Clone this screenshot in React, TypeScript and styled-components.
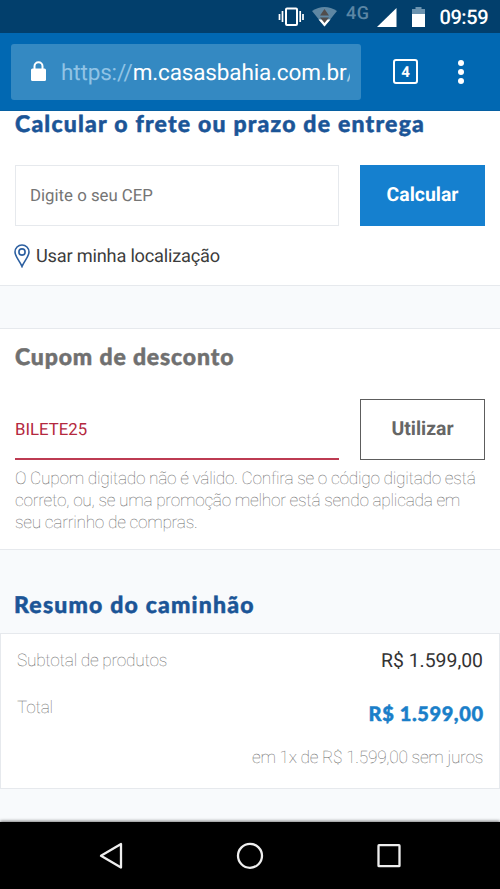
import React from "react";
import styled, { createGlobalStyle } from "styled-components";

const Global = createGlobalStyle`
  * { box-sizing: border-box; }
  body { margin: 0; background: #f8fafc; font-family: Roboto, "Liberation Sans", sans-serif; text-rendering: geometricPrecision; }
  button, input { font-family: inherit; margin: 0; border-radius: 0; text-rendering: inherit; }
`;

const Screen = styled.div`
  width: 500px;
  height: 889px;
  display: flex;
  flex-direction: column;
  overflow: hidden;
  background: #f8fafc;
`;

const StatusBar = styled.header`
  flex: none;
  height: 33px;
  background: #023f6c;
  svg { display: block; }
`;

const Toolbar = styled.div`
  flex: none;
  height: 78px;
  padding: 0 33px 0 11px;
  display: flex;
  align-items: center;
  background: #0168b2;
  border-bottom: 1px solid #0660a2;
`;

const AddressBar = styled.div`
  width: 350px;
  height: 56px;
  padding-left: 19px;
  border-radius: 3px;
  display: flex;
  align-items: center;
  gap: 14px;
  background: #3489c2;
  overflow: hidden;
`;

const Url = styled.span`
  width: 289px;
  overflow: hidden;
  white-space: nowrap;
  font-size: 22.5px;
  line-height: 32px;
  padding-top: 2px;
  letter-spacing: -0.15px;
  color: #fff;
`;

const Scheme = styled.span`
  color: #90c3e5;
`;

const Slash = styled.span`
  color: #a5cbe5;
`;

const TabCount = styled.div`
  width: 25px;
  height: 25px;
  margin-left: 32px;
  border: 2px solid #fff;
  border-radius: 3px;
  display: flex;
  align-items: center;
  justify-content: center;
  color: #fff;
  font-size: 15px;
  font-weight: 700;
`;

const MenuDots = styled.div`
  margin-left: auto;
  margin-right: 3px;
  display: flex;
  flex-direction: column;
  gap: 3px;
`;

const Dot = styled.i`
  width: 6px;
  height: 6px;
  border-radius: 50%;
  background: #fff;
`;

const Page = styled.main`
  flex: 1;
  min-height: 0;
  overflow: hidden;
`;

const Section = styled.section<{ $height: number; $first?: boolean }>`
  height: ${(p) => p.$height}px;
  padding: 0 15px;
  background: #fff;
  border-bottom: 1px solid #e6e9ed;
  border-top: ${(p) => (p.$first ? "0" : "1px solid #e6e9ed")};
  margin-bottom: ${(p) => (p.$first ? 42 : 0)}px;
`;

const Heading = styled.h2<{ $color?: string; $top: number; $track: number }>`
  margin: 0;
  padding: ${(p) => p.$top}px 0 2px;
  font-family: "Lato Black", Lato, sans-serif;
  font-weight: 900;
  font-size: 23px;
  line-height: 24px;
  letter-spacing: ${(p) => p.$track}px;
  white-space: nowrap;
  color: ${(p) => p.$color ?? "#1b5597"};
  -webkit-text-stroke: 0.5px currentColor;
`;

const FormRow = styled.div<{ $top: number }>`
  margin-top: ${(p) => p.$top}px;
  display: flex;
  gap: 21px;
`;

const Field = styled.input<{ $error?: boolean }>`
  width: 324px;
  height: 61px;
  outline: none;
  background: #fff;
  font-size: 16.8px;
  padding: ${(p) => (p.$error ? "2px 0 0" : "1px 14px 0")};
  border: 1px solid #e6e9ed;
  ${(p) => p.$error && "border-width: 0 0 2px; border-color: #bd3b52;"}
  color: #b4283e;
  &::placeholder { color: #757575; opacity: 1; }
`;

const Button = styled.button<{ $outline?: boolean }>`
  width: 125px;
  height: 61px;
  padding: 0 0 2px;
  border: ${(p) => (p.$outline ? "1px solid #5d5d5d" : "0")};
  background: ${(p) => (p.$outline ? "#fff" : "#1580cf")};
  color: ${(p) => (p.$outline ? "#666" : "#fff")};
  font-size: 19.4px;
  font-weight: 700;
`;

const LocationLink = styled.div`
  margin: 15px 0 0 -1px;
  display: flex;
  align-items: center;
  gap: 6px;
  font-size: 18.2px;
  letter-spacing: -0.2px;
  line-height: 26px;
  color: #3b3b3b;
  span { padding-top: 3px; }
  svg { margin-top: 1px; }
`;

const ErrorText = styled.p`
  margin: 8px 0 0;
  font-size: 17.3px;
  line-height: 22px;
  font-weight: 100;
  letter-spacing: -0.27px;
  color: #686868;
  white-space: nowrap;
`;

const SummaryBox = styled.section`
  height: 156px;
  padding: 13px 16px 0;
  background: #fff;
  border: 1px solid #e6e9ed;
`;

const SummaryHead = styled.div`
  height: 83px;
  padding-left: 14px;
`;

const SummaryRow = styled.div<{ $height: number }>`
  height: ${(p) => p.$height}px;
  display: flex;
  justify-content: space-between;
  line-height: 26px;
`;

const Muted = styled.span`
  padding-top: 1px;
  font-size: 17.3px;
  font-weight: 100;
  letter-spacing: -0.27px;
  color: #686868;
`;

const Price = styled.span`
  padding-top: 1px;
  font-size: 19.4px;
  color: #333;
`;

const Total = styled.strong`
  padding-top: 7px;
  font-family: "Lato Black", Lato, sans-serif;
  font-weight: 900;
  font-size: 20px;
  letter-spacing: 0.6px;
  margin-right: -0.6px;
  color: #1a7fc9;
  -webkit-text-stroke: 0.5px currentColor;
`;

const Installments = styled.div`
  padding-top: 2px;
  text-align: right;
  line-height: 24px;
`;

const NavBar = styled.nav`
  flex: none;
  height: 67px;
  background: #000;
  box-shadow: 0 -1px 3px rgba(0, 0, 0, 0.5);
  position: relative;
  svg { display: block; }
`;

export default function App() {
  return (
    <Screen>
      <Global />
      <StatusBar>
        <svg width="500" height="33" viewBox="0 0 500 33" fontFamily="Roboto">
          <g fill="none" stroke="#fff" strokeWidth="2">
            <rect x="286" y="8.5" width="11" height="16.5" rx="1" />
            <path d="M282.5 11v11M279.5 14v6M300.2 11v11M303 14v6" strokeWidth="1.7" />
          </g>
          <path d="M312 11Q324.500 3 337 11L324.500 26.500Z" fill="#5f87a3" />
          <path d="M318.500 19.500H330.500L324.500 26.500Z" fill="#fff" />
          <path d="M320 15.500L324.500 9L329 15.500ZM320 17.500H329L324.500 23Z" fill="#514d4c" />
          <text x="346" y="18.500" fontSize="18" fontWeight="500" letterSpacing="0.6" fill="#5b86a5">4G</text>
          <path d="M377 27L396.500 8V27Z" fill="#fff" />
          <path d="M412 14V9H415.500V7H421.500V9H425V14Z" fill="#6c93af" />
          <path d="M412 14H425V27H412Z" fill="#fff" />
          <text x="439.500" y="24.300" fontSize="20" fontWeight="500" fill="#fff" textLength="49">09:59</text>
        </svg>
      </StatusBar>
      <Toolbar>
        <AddressBar>
          <svg width="17" height="21" viewBox="0 0 17 21">
            <path d="M4.500 9V5.200a4 4 0 0 1 8 0V9" fill="none" stroke="#fff" strokeWidth="2" />
            <rect x="1" y="7.500" width="15" height="12.500" rx="1.500" fill="#fff" />
          </svg>
          <Url><Scheme>https://</Scheme>m.casasbahia.com.br<Slash>/</Slash></Url>
        </AddressBar>
        <TabCount>4</TabCount>
        <MenuDots><Dot /><Dot /><Dot /></MenuDots>
      </Toolbar>
      <Page>
        <Section $height={175} $first>
          <Heading $top={0} $track={1.22}>Calcular o frete ou prazo de entrega</Heading>
          <FormRow $top={28}>
            <Field placeholder="Digite o seu CEP" />
            <Button>Calcular</Button>
          </FormRow>
          <LocationLink>
            <svg width="16" height="24" viewBox="0 0 16 24" fill="none" stroke="#2c5fa0" strokeWidth="1.600">
              <path d="M8 22.500C6 17.500 1 12.500 1 8a7 7 0 0 1 14 0C15 12.500 10 17.500 8 22.500Z" />
              <circle cx="8" cy="8" r="3.100" />
            </svg>
            <span>Usar minha localização</span>
          </LocationLink>
        </Section>
        <Section $height={222}>
          <Heading $top={15} $track={0.85} $color="#707070">Cupom de desconto</Heading>
          <FormRow $top={29}>
            <Field $error defaultValue="BILETE25" />
            <Button $outline>Utilizar</Button>
          </FormRow>
          <ErrorText>
            O Cupom digitado não é válido. Confira se o código digitado está
            <br />
            correto, ou, se uma promoção melhor está sendo aplicada em
            <br />
            seu carrinho de compras.
          </ErrorText>
        </Section>
        <SummaryHead>
          <Heading $top={42} $track={1.2}>Resumo do caminhão</Heading>
        </SummaryHead>
        <SummaryBox>
          <SummaryRow $height={47}>
            <Muted>Subtotal de produtos</Muted>
            <Price>R$ 1.599,00</Price>
          </SummaryRow>
          <SummaryRow $height={50}>
            <Muted>Total</Muted>
            <Total>R$ 1.599,00</Total>
          </SummaryRow>
          <Installments>
            <Muted>em 1x de R$ 1.599,00 sem juros</Muted>
          </Installments>
        </SummaryBox>
      </Page>
      <NavBar>
        <svg width="500" height="67" viewBox="0 0 500 67" fill="none" stroke="#eee" strokeWidth="2.300" strokeLinejoin="round">
          <path d="M101 33.800L121 22V45.500Z" />
          <circle cx="250" cy="33.800" r="12" />
          <rect x="378.500" y="23.200" width="21" height="21" rx="0.500" />
        </svg>
      </NavBar>
    </Screen>
  );
}
